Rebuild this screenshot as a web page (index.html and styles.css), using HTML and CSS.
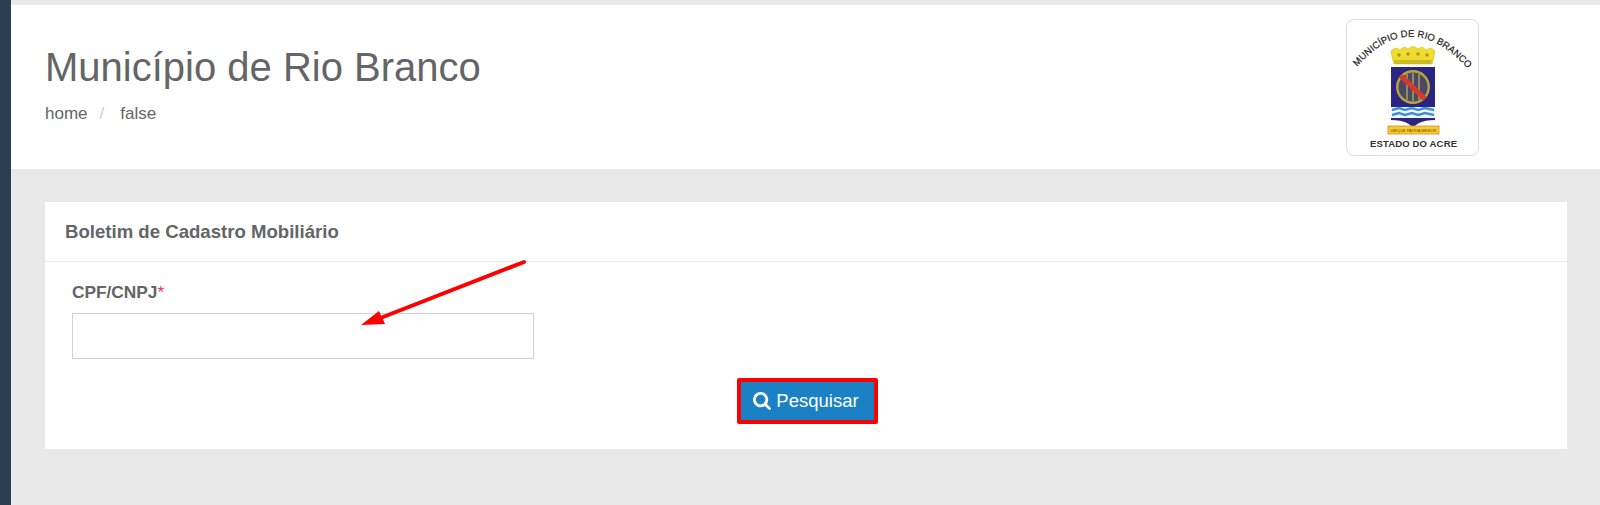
FILE: index.html
```html
<!DOCTYPE html>
<html lang="pt-BR">
<head>
    <meta charset="UTF-8">
    <title>Município de Rio Branco</title>
    <link rel="stylesheet" href="styles.css">
</head>
<body>
    <div class="sidebar"></div>
    <div class="main">
        <!-- Cabeçalho -->
        <div class="page-header">
            <div class="page-title">
                <h1>Município de Rio Branco</h1>
                <div class="breadcrumb">
                    <span>home</span>
                    <span class="sep">/</span>
                    <span>false</span>
                </div>
            </div>
            <div class="logo-box">
                <svg class="logo" viewBox="0 0 131 135">
                    <defs>
                        <path id="arc" d="M10 47 Q64 -15 122 50"/>
                    </defs>
                    <text class="logo-arc"><textPath href="#arc" textLength="131">MUNICÍPIO DE RIO BRANCO</textPath></text>
                    <!-- coroa -->
                    <path d="M44 31 Q48 26 53 30 Q57 25 61 29 Q66 24 71 29 Q75 25 79 30 Q84 26 88 31 Q87 39 85 44 L47 44 Q45 39 44 31 Z" fill="#efdc2e" stroke="#c9b420" stroke-width="0.5"/>
                    <path d="M47 40 H85 L84 44 H48 Z" fill="#cdbb26"/>
                    <circle cx="52" cy="35" r="1.800" fill="#b09a1c"/>
                    <circle cx="61" cy="34" r="1.800" fill="#b09a1c"/>
                    <circle cx="71" cy="34" r="1.800" fill="#b09a1c"/>
                    <circle cx="80" cy="35" r="1.800" fill="#b09a1c"/>
                    <!-- brasao -->
                    <path d="M44 47 H88 V100 Q78 100 72 103 Q68 105 66 108 Q64 105 60 103 Q54 100 44 100 Z" fill="#2a2580"/>
                    <circle cx="66" cy="67" r="17" fill="#b9a33a"/>
                    <circle cx="66" cy="67" r="14.500" fill="#4a4a68"/>
                    <path d="M60 54 V80 M66 53 V81 M72 54 V80" stroke="#a8a05a" stroke-width="1.500"/>
                    <path d="M54 56 L78 79" stroke="#d8392b" stroke-width="5"/>
                    <!-- ondas -->
                    <path d="M44 87 H88 V98 H44 Z" fill="#f4f8fc"/>
                    <path d="M45 90 L52 88 L58 90 L65 88 L71 90 L78 88 L87 90" fill="none" stroke="#3f8fd8" stroke-width="2.500"/>
                    <path d="M45 95 L52 93 L58 95 L65 93 L71 95 L78 93 L87 95" fill="none" stroke="#3f8fd8" stroke-width="2.500"/>
                    <!-- faixa -->
                    <rect x="41" y="106" width="51" height="8" fill="#f2cf2e" stroke="#e3852a" stroke-width="0.8"/>
                    <text class="logo-motto" x="66.500" y="112" text-anchor="middle" textLength="46">UBIQUE PATRIA MEMOR</text>
                    <text class="logo-state" x="66.500" y="127" text-anchor="middle" textLength="87">ESTADO DO ACRE</text>
                </svg>
            </div>
        </div>

        <!-- Conteudo -->
        <div class="content">
            <div class="panel">
                <div class="panel-title">Boletim de Cadastro Mobiliário</div>
                <div class="panel-body">
                    <label class="field-label" for="cpf">CPF/CNPJ<span class="required">*</span></label>
                    <input class="field-input" type="text" id="cpf">
                    <div class="actions">
                        <button class="btn-search" type="button">
                            <svg class="icon" viewBox="0 0 1664 1664"><path d="M1152 704q0-185-131.500-316.500t-316.500-131.500-316.500 131.500-131.500 316.500 131.500 316.500 316.500 131.500 316.500-131.500 131.500-316.500zm512 832q0 52-38 90t-90 38q-54 0-90-38l-343-342q-179 124-399 124-143 0-273.500-55.500t-225-150-150-225-55.500-273.500 55.500-273.500 150-225 225-150 273.500-55.500 273.500 55.500 225 150 150 225 55.500 273.500q0 220-124 399l343 343q37 37 37 90z" fill="currentColor"/></svg>
                            Pesquisar
                        </button>
                    </div>
                </div>
                <!-- seta vermelha por cima do formulario -->
                <svg class="arrow" viewBox="0 0 180 72">
                    <path d="M168 3 L27 58" stroke="#fe0000" stroke-width="4" stroke-linecap="round" fill="none"/>
                    <path d="M5 66 L23 52 L29 65 Z" fill="#fe0000"/>
                </svg>
            </div>
        </div>
    </div>
</body>
</html>
```

FILE: styles.css
```css
body {
    margin: 0;
    height: 505px;
    overflow: hidden;
    display: flex;
    font-family: "Liberation Sans", Arial, sans-serif;
    color: #636567;
    background: #e9e9ea;
}
.sidebar {
    width: 11px;
    background: #2a3f54;
    flex-shrink: 0;
}
.main {
    flex: 1;
    padding-top: 5px;
}
.page-header {
    height: 164px;
    background: #fff;
    display: flex;
    justify-content: space-between;
    padding-left: 34px;
    padding-right: 121px;
}
h1 {
    margin: 39px 0 0;
    font-size: 40px;
    line-height: 46px;
    font-weight: normal;
}
.breadcrumb {
    margin-top: 14px;
    font-size: 17px;
    line-height: 20px;
    display: flex;
    gap: 12px;
}
.sep {
    color: #ccc;
    margin-right: 4px;
}
.logo-box {
    width: 131px;
    height: 135px;
    margin-top: 14px;
    border: 1px solid #ddd;
    border-radius: 8px;
    box-sizing: content-box;
}
.logo {
    display: block;
    width: 131px;
    height: 135px;
}
.logo-arc {
    font-size: 9.500px;
    fill: #222;
    stroke: #222;
    stroke-width: 0.2px;
}
.logo-motto {
    font-size: 4px;
    fill: #7a3b10;
}
.logo-state {
    font-size: 9.500px;
    font-weight: bold;
    fill: #333;
}
.content {
    padding: 33px 33px 0 34px;
}
.panel {
    position: relative;
    background: #fff;
    height: 247px;
}
.panel-title {
    height: 59px;
    line-height: 59px;
    padding-left: 20px;
    font-size: 18.600px;
    font-weight: bold;
    border-bottom: 1px solid #e9ecef;
}
.panel-body {
    padding: 20px 24px 0 27px;
}
.field-label {
    display: block;
    font-size: 17.300px;
    font-weight: bold;
    line-height: 20px;
}
.required {
    color: #e8384f;
    font-weight: normal;
}
.field-input {
    display: block;
    width: 462px;
    height: 46px;
    margin-top: 11px;
    box-sizing: border-box;
    border: 1px solid #d2d2d2;
    background: #fff;
}
.actions {
    margin-top: 19px;
    display: flex;
    justify-content: center;
}
.btn-search {
    width: 141px;
    height: 46px;
    box-sizing: border-box;
    border: 4px solid #fe0000;
    border-radius: 2px;
    background: #1a82c4;
    color: #fff;
    font-family: inherit;
    font-size: 18.500px;
    display: flex;
    align-items: center;
    justify-content: center;
    gap: 5px;
    padding: 0 3px 0 0;
}
.icon {
    width: 18px;
    height: 18px;
}
.arrow {
    position: absolute;
    left: 311px;
    top: 57px;
    width: 180px;
    height: 72px;
}
```
